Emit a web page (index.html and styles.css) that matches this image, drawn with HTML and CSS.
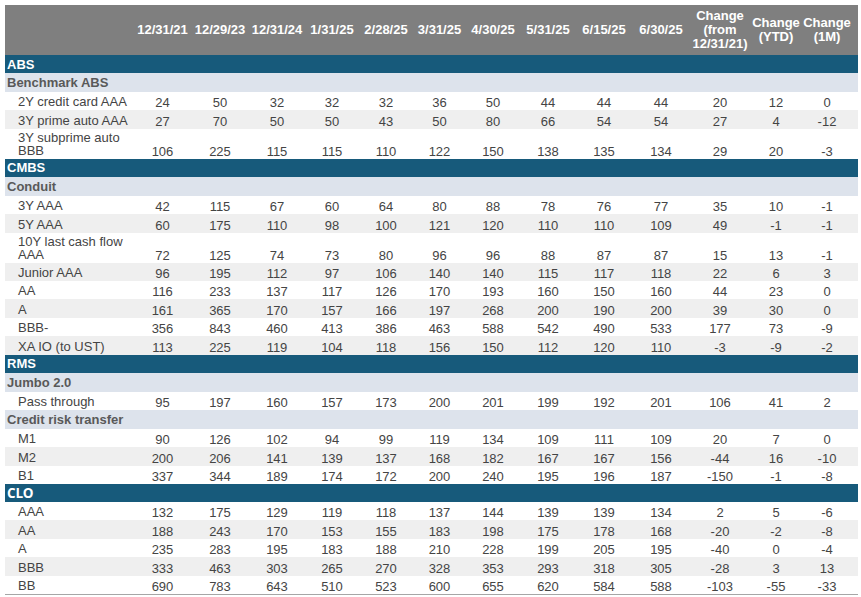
FILE: index.html
```html
<!DOCTYPE html>
<html>
<head>
<meta charset="utf-8">
<link rel="stylesheet" href="styles.css">
</head>
<body>
<table class="spreads">
  <colgroup>
    <col class="c-label">
    <col class="c57"><col class="c58"><col class="c56"><col class="c54"><col class="c54">
    <col class="c53"><col class="c54"><col class="c56"><col class="c56"><col class="c58">
    <col class="c60"><col class="c52"><col class="c56">
  </colgroup>
  <thead>
    <tr class="head">
      <th></th>
      <th>12/31/21</th><th>12/29/23</th><th>12/31/24</th><th>1/31/25</th><th>2/28/25</th>
      <th>3/31/25</th><th>4/30/25</th><th>5/31/25</th><th>6/15/25</th><th>6/30/25</th>
      <th>Change<br>(from<br>12/31/21)</th><th>Change<br>(YTD)</th><th class="last">Change<br>(1M)</th>
    </tr>
  </thead>
  <tbody>
    <tr class="section"><td colspan="14">ABS</td></tr>
    <tr class="sub"><td colspan="14">Benchmark ABS</td></tr>
    <tr class="row"><td>2Y credit card AAA</td><td>24</td><td>50</td><td>32</td><td>32</td><td>32</td><td>36</td><td>50</td><td>44</td><td>44</td><td>44</td><td>20</td><td>12</td><td class="last">0</td></tr>
    <tr class="row alt"><td>3Y prime auto AAA</td><td>27</td><td>70</td><td>50</td><td>50</td><td>43</td><td>50</td><td>80</td><td>66</td><td>54</td><td>54</td><td>27</td><td>4</td><td class="last">-12</td></tr>
    <tr class="row tall"><td>3Y subprime auto BBB</td><td>106</td><td>225</td><td>115</td><td>115</td><td>110</td><td>122</td><td>150</td><td>138</td><td>135</td><td>134</td><td>29</td><td>20</td><td class="last">-3</td></tr>

    <tr class="section"><td colspan="14">CMBS</td></tr>
    <tr class="sub"><td colspan="14">Conduit</td></tr>
    <tr class="row"><td>3Y AAA</td><td>42</td><td>115</td><td>67</td><td>60</td><td>64</td><td>80</td><td>88</td><td>78</td><td>76</td><td>77</td><td>35</td><td>10</td><td class="last">-1</td></tr>
    <tr class="row alt"><td>5Y AAA</td><td>60</td><td>175</td><td>110</td><td>98</td><td>100</td><td>121</td><td>120</td><td>110</td><td>110</td><td>109</td><td>49</td><td>-1</td><td class="last">-1</td></tr>
    <tr class="row tall"><td>10Y last cash flow AAA</td><td>72</td><td>125</td><td>74</td><td>73</td><td>80</td><td>96</td><td>96</td><td>88</td><td>87</td><td>87</td><td>15</td><td>13</td><td class="last">-1</td></tr>
    <tr class="row alt"><td>Junior AAA</td><td>96</td><td>195</td><td>112</td><td>97</td><td>106</td><td>140</td><td>140</td><td>115</td><td>117</td><td>118</td><td>22</td><td>6</td><td class="last">3</td></tr>
    <tr class="row"><td>AA</td><td>116</td><td>233</td><td>137</td><td>117</td><td>126</td><td>170</td><td>193</td><td>160</td><td>150</td><td>160</td><td>44</td><td>23</td><td class="last">0</td></tr>
    <tr class="row alt"><td>A</td><td>161</td><td>365</td><td>170</td><td>157</td><td>166</td><td>197</td><td>268</td><td>200</td><td>190</td><td>200</td><td>39</td><td>30</td><td class="last">0</td></tr>
    <tr class="row"><td>BBB-</td><td>356</td><td>843</td><td>460</td><td>413</td><td>386</td><td>463</td><td>588</td><td>542</td><td>490</td><td>533</td><td>177</td><td>73</td><td class="last">-9</td></tr>
    <tr class="row alt"><td>XA IO (to UST)</td><td>113</td><td>225</td><td>119</td><td>104</td><td>118</td><td>156</td><td>150</td><td>112</td><td>120</td><td>110</td><td>-3</td><td>-9</td><td class="last">-2</td></tr>

    <tr class="section"><td colspan="14">RMS</td></tr>
    <tr class="sub"><td colspan="14">Jumbo 2.0</td></tr>
    <tr class="row"><td>Pass through</td><td>95</td><td>197</td><td>160</td><td>157</td><td>173</td><td>200</td><td>201</td><td>199</td><td>192</td><td>201</td><td>106</td><td>41</td><td class="last">2</td></tr>
    <tr class="sub"><td colspan="14">Credit risk transfer</td></tr>
    <tr class="row"><td>M1</td><td>90</td><td>126</td><td>102</td><td>94</td><td>99</td><td>119</td><td>134</td><td>109</td><td>111</td><td>109</td><td>20</td><td>7</td><td class="last">0</td></tr>
    <tr class="row alt"><td>M2</td><td>200</td><td>206</td><td>141</td><td>139</td><td>137</td><td>168</td><td>182</td><td>167</td><td>167</td><td>156</td><td>-44</td><td>16</td><td class="last">-10</td></tr>
    <tr class="row"><td>B1</td><td>337</td><td>344</td><td>189</td><td>174</td><td>172</td><td>200</td><td>240</td><td>195</td><td>196</td><td>187</td><td>-150</td><td>-1</td><td class="last">-8</td></tr>

    <tr class="section clo"><td colspan="14">CLO</td></tr>
    <tr class="row"><td>AAA</td><td>132</td><td>175</td><td>129</td><td>119</td><td>118</td><td>137</td><td>144</td><td>139</td><td>139</td><td>134</td><td>2</td><td>5</td><td class="last">-6</td></tr>
    <tr class="row alt"><td>AA</td><td>188</td><td>243</td><td>170</td><td>153</td><td>155</td><td>183</td><td>198</td><td>175</td><td>178</td><td>168</td><td>-20</td><td>-2</td><td class="last">-8</td></tr>
    <tr class="row"><td>A</td><td>235</td><td>283</td><td>195</td><td>183</td><td>188</td><td>210</td><td>228</td><td>199</td><td>205</td><td>195</td><td>-40</td><td>0</td><td class="last">-4</td></tr>
    <tr class="row alt"><td>BBB</td><td>333</td><td>463</td><td>303</td><td>265</td><td>270</td><td>328</td><td>353</td><td>293</td><td>318</td><td>305</td><td>-28</td><td>3</td><td class="last">13</td></tr>
    <tr class="row end"><td>BB</td><td>690</td><td>783</td><td>643</td><td>510</td><td>523</td><td>600</td><td>655</td><td>620</td><td>584</td><td>588</td><td>-103</td><td>-55</td><td class="last">-33</td></tr>
  </tbody>
</table>
</body>
</html>
```

FILE: styles.css
```css
html, body {
  margin: 0;
  padding: 0;
  background: #ffffff;
}
body {
  padding: 5px 0 0 5px;
  font-family: "Liberation Sans", Arial, sans-serif;
  font-size: 13px;
  color: #444444;
}
.spreads {
  width: 853px;
  table-layout: fixed;
  border-collapse: collapse;
  border-spacing: 0;
}
.c-label { width: 129px; }
.c52 { width: 52px; }
.c53 { width: 53px; }
.c54 { width: 54px; }
.c56 { width: 56px; }
.c57 { width: 57px; }
.c58 { width: 58px; }
.c60 { width: 60px; }

.spreads th,
.spreads td {
  box-sizing: border-box;
  padding: 0;
  white-space: nowrap;
}

.head th {
  height: 50px;
  background: #7f7f7f;
  color: #ffffff;
  font-weight: bold;
  font-size: 13px;
  line-height: 14px;
  text-align: center;
  vertical-align: middle;
}
.spreads .last { padding-right: 6px; }

.section td {
  height: 18px;
  background: #175a7b;
  color: #ffffff;
  font-weight: bold;
  font-size: 13px;
  line-height: 15px;
  padding-left: 2px;
  vertical-align: middle;
}
.section.clo td {
  font-family: "Open Sans", "Liberation Sans", sans-serif;
  font-size: 13.5px;
  letter-spacing: -0.2px;
}

.sub td {
  height: 19px;
  background: #dde3ec;
  color: #595959;
  font-weight: bold;
  font-size: 13px;
  line-height: 15px;
  padding-left: 2px;
  vertical-align: middle;
}

.row td {
  height: 18.4px;
  text-align: center;
  vertical-align: bottom;
  line-height: 13px;
  padding-bottom: 1px;
}
.row td:first-child {
  text-align: left;
  padding-left: 13px;
  padding-bottom: 2px;
  line-height: 13px;
  white-space: normal;
}
.row.tall td { height: 30px; }
.row.alt td { background: #efefef; }
.row.end td { border-bottom: 1px solid #a6a6a6; }
```
